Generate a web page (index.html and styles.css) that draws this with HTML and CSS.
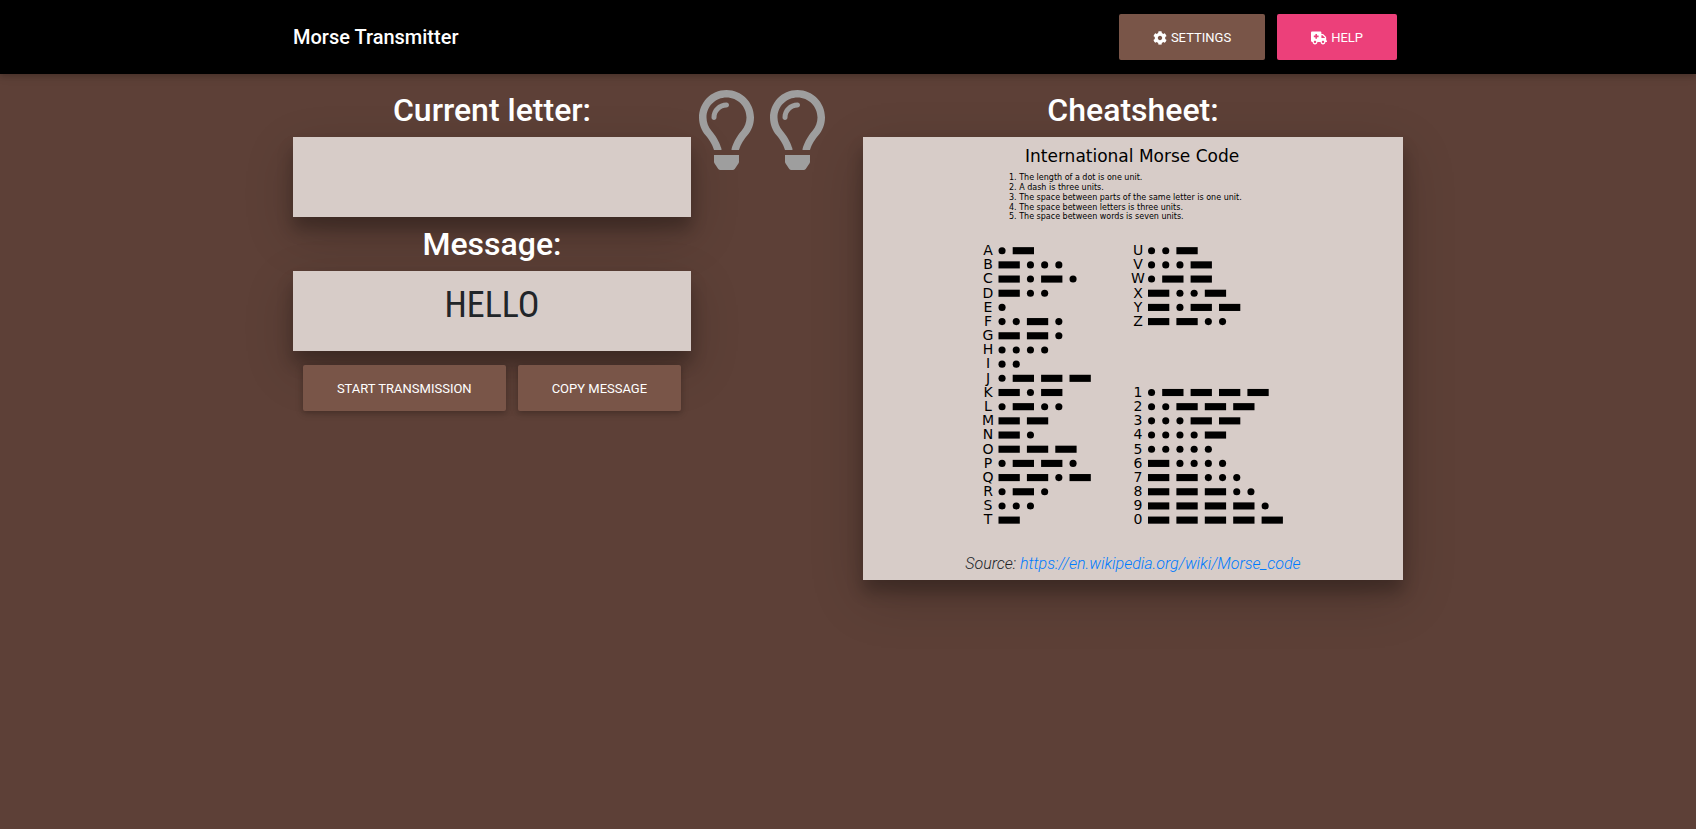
FILE: index.html
```html
<!DOCTYPE html>
<html lang="en">
<head>
<meta charset="utf-8">
<meta name="viewport" content="width=device-width, initial-scale=1">
<title>Morse Transmitter</title>
<link rel="stylesheet" href="styles.css">
</head>
<body>
<header class="navbar">
  <div class="container navbar-inner">
    <a class="brand" href="#">Morse Transmitter</a>
    <div class="nav-actions">
      <button class="btn" type="button"><svg class="icon" viewBox="0 0 512 512" aria-hidden="true"><path d="M487.4 315.7l-42.6-24.6c4.3-23.2 4.3-47 0-70.2l42.6-24.6c4.9-2.8 7.1-8.6 5.5-14-11.1-35.6-30-67.8-54.7-94.6-3.8-4.1-10-5.1-14.8-2.3L380.8 110c-17.9-15.4-38.5-27.3-60.8-35.1V25.8c0-5.6-3.9-10.5-9.4-11.7-36.7-8.2-74.3-7.8-109.2 0-5.5 1.2-9.4 6.1-9.4 11.7V75c-22.2 7.9-42.8 19.8-60.8 35.1L88.7 85.5c-4.9-2.8-11-1.9-14.8 2.3-24.7 26.7-43.6 58.9-54.7 94.6-1.7 5.4.6 11.2 5.5 14L67.3 221c-4.3 23.2-4.3 47 0 70.2l-42.6 24.6c-4.9 2.8-7.1 8.6-5.5 14 11.1 35.6 30 67.8 54.7 94.6 3.8 4.1 10 5.1 14.8 2.3l42.6-24.6c17.9 15.4 38.5 27.3 60.8 35.1v49.2c0 5.6 3.9 10.5 9.4 11.7 36.7 8.2 74.3 7.8 109.2 0 5.5-1.2 9.4-6.1 9.4-11.7v-49.2c22.2-7.9 42.8-19.8 60.8-35.1l42.6 24.6c4.9 2.8 11 1.9 14.8-2.3 24.7-26.7 43.6-58.9 54.7-94.6 1.5-5.5-.7-11.3-5.6-14.1zM256 336c-44.1 0-80-35.9-80-80s35.9-80 80-80 80 35.9 80 80-35.9 80-80 80z"/></svg><span>SETTINGS</span></button>
      <button class="btn btn-help" type="button"><svg class="icon icon-wide" viewBox="0 0 640 512" aria-hidden="true"><path d="M624 352h-16V243.900c0-12.700-5.100-24.900-14.100-33.900L494 110.100c-9-9-21.200-14.100-33.900-14.100H416V48c0-26.500-21.500-48-48-48H48C21.500 0 0 21.500 0 48v320c0 26.500 21.500 48 48 48h16c0 53 43 96 96 96s96-43 96-96h128c0 53 43 96 96 96s96-43 96-96h48c8.800 0 16-7.200 16-16v-32c0-8.800-7.200-16-16-16zM160 464c-26.500 0-48-21.500-48-48s21.500-48 48-48 48 21.500 48 48-21.500 48-48 48zm144-248c0 4.400-3.600 8-8 8h-56v56c0 4.400-3.600 8-8 8h-48c-4.400 0-8-3.600-8-8v-56h-56c-4.400 0-8-3.600-8-8v-48c0-4.400 3.600-8 8-8h56v-56c0-4.400 3.600-8 8-8h48c4.400 0 8 3.600 8 8v56h56c4.400 0 8 3.600 8 8v48zm176 248c-26.500 0-48-21.500-48-48s21.500-48 48-48 48 21.500 48 48-21.500 48-48 48zm80-208H416V144h44.100l99.900 99.900V256z"/></svg><span>HELP</span></button>
    </div>
  </div>
</header>

<main class="container columns">
  <section class="transmitter">
    <div class="readout">
      <h2 class="heading">Current letter:</h2>
      <div class="panel display"></div>
      <h2 class="heading">Message:</h2>
      <div class="panel display">HELLO</div>
      <div class="actions">
        <button class="btn" type="button">START TRANSMISSION</button>
        <button class="btn" type="button">COPY MESSAGE</button>
      </div>
    </div>
    <div class="bulbs">
      <svg class="bulb" viewBox="0 0 352 512" aria-hidden="true"><path id="bulb-shape" d="M176 80c-52.940 0-96 43.060-96 96 0 8.840 7.160 16 16 16s16-7.160 16-16c0-35.300 28.720-64 64-64 8.840 0 16-7.160 16-16s-7.160-16-16-16zM96.060 459.170c0 3.150.930 6.220 2.680 8.840l24.510 36.840c2.970 4.460 7.970 7.140 13.320 7.140h78.850c5.360 0 10.360-2.680 13.320-7.140l24.510-36.840c1.740-2.620 2.670-5.700 2.680-8.840l.050-43.180H96.020l.040 43.180zM176 0C73.720 0 0 82.970 0 176c0 44.370 16.450 84.850 43.560 115.780 16.640 18.990 42.740 58.800 52.420 92.160v.060h48v-.120c-.010-4.770-.720-9.510-2.150-14.070-5.590-17.810-22.820-64.770-62.170-109.670-20.540-23.430-31.520-53.150-31.610-84.140-.200-73.640 59.670-128 127.950-128 70.580 0 128 57.420 128 128 0 30.970-11.240 60.850-31.650 84.140-39.110 44.610-56.420 91.470-62.100 109.460a47.507 47.507 0 0 0-2.220 14.300v.100h48v-.050c9.680-33.370 35.780-73.180 52.420-92.160C335.550 260.850 352 220.370 352 176 352 78.800 273.200 0 176 0z"/></svg>
      <svg class="bulb" viewBox="0 0 352 512" aria-hidden="true"><use href="#bulb-shape"/></svg>
    </div>
  </section>

  <section class="cheatsheet">
    <h2 class="heading">Cheatsheet:</h2>
    <div class="panel sheet">
      <svg class="chart" id="chart" viewBox="0 0 540 414" role="img" aria-label="International Morse Code">
        <text class="chart-title" x="162" y="25">International Morse Code</text>
        <g class="chart-rules">
          <text x="146" y="43">1. The length of a dot is one unit.</text>
          <text x="146" y="53">2. A dash is three units.</text>
          <text x="146" y="63">3. The space between parts of the same letter is one unit.</text>
          <text x="146" y="73">4. The space between letters is three units.</text>
          <text x="146" y="82">5. The space between words is seven units.</text>
        </g>
      </svg>
      <p class="source">Source: <a href="https://en.wikipedia.org/wiki/Morse_code">https://en.wikipedia.org/wiki/Morse_code</a></p>
    </div>
  </section>
</main>
<script src="chart.js"></script>
</body>
</html>
```
FILE: styles.css
```css
*, *::before, *::after { box-sizing: border-box; }

body {
  margin: 0;
  min-height: 100vh;
  background: #5d4037;
  color: #212529;
  font: 300 16px/24px Roboto, sans-serif;
}

.container {
  width: 100%;
  max-width: 1140px;
  margin: 0 auto;
  padding: 0 15px;
}

.navbar {
  position: relative;
  background: #000;
  box-shadow: 0 2px 5px rgba(0, 0, 0, .16), 0 2px 10px rgba(0, 0, 0, .12);
}

.navbar-inner {
  display: flex;
  align-items: center;
  justify-content: space-between;
  padding-top: 14px;
  padding-bottom: 14px;
}

.brand {
  color: #fff;
  font-size: 20px;
  font-weight: 500;
  text-decoration: none;
}

.nav-actions, .actions {
  display: flex;
  gap: 12px;
}

.nav-actions { padding-right: 6px; }

.btn {
  display: flex;
  align-items: center;
  gap: 4px;
  height: 46px;
  padding: 2px 34px 0;
  border: 0;
  border-radius: 2px;
  background: #795548;
  color: #fff;
  font: 400 13px/20px Roboto, sans-serif;
  white-space: nowrap;
  box-shadow: 0 2px 5px rgba(0, 0, 0, .16), 0 2px 10px rgba(0, 0, 0, .12);
  cursor: pointer;
}

.btn-help { background: #ec407a; }

.icon {
  width: 14px;
  height: 14px;
  fill: currentColor;
}

.icon-wide { width: 16px; }

.columns {
  display: grid;
  grid-template-columns: 1fr 1fr;
  gap: 30px;
  padding-top: 16px;
}

.transmitter {
  display: flex;
  align-items: flex-start;
}

.readout { flex: 1; }

.heading {
  margin: 0 0 6px;
  color: #fff;
  font-size: 32px;
  font-weight: 500;
  line-height: 41px;
  text-align: center;
}

.panel {
  background: #d7ccc8;
  text-align: center;
  box-shadow: 0 12px 15px rgba(0, 0, 0, .24), 0 17px 50px rgba(0, 0, 0, .19);
}

.display {
  height: 80px;
  margin-bottom: 7px;
  font: 400 36px/68px "Roboto Condensed", "Open Sans Condensed", Roboto, sans-serif;
}

.actions {
  position: relative;
  justify-content: center;
  padding-top: 7px;
}

.bulbs {
  display: flex;
  gap: 16px;
  padding: 0 8px;
}

.bulb {
  width: 55px;
  height: 80px;
  fill: #9e9e9e;
}

.sheet { padding: 0 0 4px; }

.chart {
  display: block;
  width: 100%;
  margin-bottom: 1px;
  font-family: "DejaVu Sans", sans-serif;
  font-weight: 400;
  fill: #000;
}

.chart-title { font-size: 17px; }

.chart-rules { font-size: 8px; }

.chart-key {
  font-size: 14px;
  text-anchor: middle;
}

.source {
  margin: 0;
  font-style: italic;
}

.source a {
  color: #007bff;
  text-decoration: none;
}
```
FILE: chart.js
```js
const UNIT = 7.1;
const ROW = 14.18;
const TOP = 113.7;

const columns = [
  { keyX: 125, codeX: 135.5, firstRow: 0, rows: "A.- B-... C-.-. D-.. E. F..-. G--. H.... I.. J.--- K-.- L.-.. M-- N-. O--- P.--. Q--.- R.-. S... T-" },
  { keyX: 275, codeX: 285, firstRow: 0, rows: "U..- V...- W.-- X-..- Y-.-- Z--.." },
  { keyX: 275, codeX: 285, firstRow: 10, rows: "1.---- 2..--- 3...-- 4....- 5..... 6-.... 7--... 8---.. 9----. 0-----" }
];

const chart = document.getElementById("chart");

function add(name, attributes, text) {
  const node = document.createElementNS("http://www.w3.org/2000/svg", name);
  for (const key in attributes) node.setAttribute(key, attributes[key]);
  if (text) node.textContent = text;
  chart.appendChild(node);
}

for (const column of columns) {
  column.rows.split(" ").forEach((entry, index) => {
    const y = TOP + (column.firstRow + index) * ROW;
    let x = column.codeX;
    add("text", { class: "chart-key", x: column.keyX, y: y + 4.3 }, entry[0]);
    for (const mark of entry.slice(1)) {
      if (mark === ".") {
        add("circle", { cx: x + UNIT / 2, cy: y, r: UNIT / 2 });
        x += UNIT * 2;
      } else {
        add("rect", { x, y: y - UNIT / 2, width: UNIT * 3, height: UNIT });
        x += UNIT * 4;
      }
    }
  });
}
```
